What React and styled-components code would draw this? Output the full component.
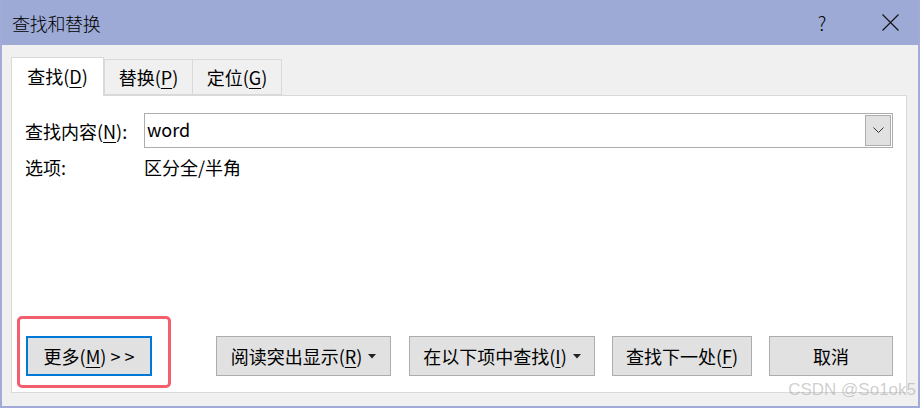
import React from 'react';
import styled, {createGlobalStyle} from 'styled-components';

const GlobalStyle = createGlobalStyle`
  html, body {
    margin: 0;
    padding: 0;
    background: #ffffff;
  }
  body {
    font-family: "Noto Sans CJK SC", "Noto Sans", sans-serif;
    color: #000000;
  }
`;

const Window = styled.div`
  box-sizing: border-box;
  width: 920px;
  height: 408px;
  display: flex;
  flex-direction: column;
  position: relative;
  background: #f0f0f0;
  border: 2px solid #a2abd8;
  border-top: none;
  overflow: hidden;
`;

const TitleBar = styled.div`
  box-sizing: border-box;
  height: 45px;
  margin: 0 -2px;
  padding: 0 12px 0 12px;
  display: flex;
  align-items: center;
  background: #9daad5;
  font-size: 18px;
  line-height: 24px;
`;

const Title = styled.div`
  flex: 1;
  font-weight: 300;
  letter-spacing: -0.3px;
`;

const TitleButton = styled.div`
  width: 36px;
  display: flex;
  justify-content: center;
  align-items: center;
  margin-left: ${props => props.gap || 0}px;
  font-weight: 300;
  font-size: 19px;
`;

const Body = styled.div`
  flex: 1;
  display: flex;
  flex-direction: column;
  padding: 12px 11px 13px 9px;
`;

const TabStrip = styled.div`
  display: flex;
  align-items: flex-end;
  position: relative;
  z-index: 1;
`;

const Tab = styled.div`
  box-sizing: border-box;
  width: ${props => props.width}px;
  height: ${props => props.active ? 39 : 36}px;
  margin-bottom: ${props => props.active ? -1 : 0}px;
  margin-left: ${props => props.active ? 0 : -1}px;
  display: flex;
  justify-content: center;
  align-items: center;
  padding-bottom: ${props => props.active ? 2 : 0}px;
  background: ${props => props.active ? '#ffffff' : '#f0f0f0'};
  border: 1px solid #d9d9d9;
  border-bottom: ${props => props.active ? 'none' : '1px solid #d9d9d9'};
  font-size: 18px;
  line-height: 24px;

  &:nth-child(2) {
    margin-left: 0;
  }
`;

const Mnemonic = styled.u`
  text-decoration-thickness: 1px;
  text-underline-offset: 3px;
`;

const Panel = styled.div`
  box-sizing: border-box;
  flex: 1;
  display: flex;
  flex-direction: column;
  padding: 17px 13px 16px 13px;
  background: #ffffff;
  border: 1px solid #d9d9d9;
`;

const FieldRow = styled.div`
  display: flex;
  align-items: center;
  height: ${props => props.height}px;
  margin-top: ${props => props.top || 0}px;
  font-size: 18px;
  line-height: 24px;
`;

const Label = styled.div`
  width: 119px;
`;

const Combo = styled.div`
  box-sizing: border-box;
  flex: 1;
  height: 35px;
  display: flex;
  align-items: center;
  border: 1px solid #adadad;
  padding: 0 1px 0 2px;
  background: #ffffff;
`;

const ComboText = styled.div`
  flex: 1;
  font-size: 18px;
  line-height: 24px;
  padding-bottom: 4px;
`;

const ComboArrow = styled.div`
  box-sizing: border-box;
  width: 26px;
  height: 31px;
  display: flex;
  justify-content: center;
  align-items: center;
  background: #e1e1e1;
  border: 1px solid #adadad;
`;

const ButtonRow = styled.div`
  margin-top: auto;
  padding-left: 1px;
  display: flex;
  align-items: center;
`;

const Button = styled.div`
  box-sizing: border-box;
  position: relative;
  width: ${props => props.width}px;
  height: 40px;
  margin-left: ${props => props.gap || 0}px;
  display: flex;
  justify-content: center;
  align-items: center;
  gap: 6px;
  background: #e1e1e1;
  border: ${props => props.focused ? '2px solid #0078d7' : '1px solid #adadad'};
  font-size: 18px;
  line-height: 24px;
  white-space: nowrap;
`;

const Highlight = styled.div`
  position: absolute;
  left: -11px;
  top: -22px;
  width: 154px;
  height: 72px;
  box-sizing: border-box;
  border: 3px solid #f2606e;
  border-radius: 5px;
  pointer-events: none;
`;

const Watermark = styled.div`
  position: absolute;
  right: 2px;
  bottom: 6px;
  font-family: "Liberation Sans", Arial, sans-serif;
  font-size: 17px;
  color: rgba(160, 160, 160, 0.5);
  pointer-events: none;
`;

const Caret = () => (
    <svg width="8" height="5" viewBox="0 0 8 5">
        <polygon points="0,0 8,0 4,4.5" fill="#222"/>
    </svg>
);

const Chevron = () => (
    <svg width="11" height="7" viewBox="0 0 11 7">
        <polyline points="0.5,0.5 5.5,5.5 10.5,0.5" fill="none" stroke="#333" strokeWidth="1"/>
    </svg>
);

const CloseIcon = () => (
    <svg width="17" height="17" viewBox="0 0 17 17">
        <path d="M0.5 0.5 L16.5 16.5 M16.5 0.5 L0.5 16.5" stroke="#111" strokeWidth="1.1" fill="none"/>
    </svg>
);

const tabs = [
    {label: '查找', key: 'D', width: 93, active: true},
    {label: '替换', key: 'P', width: 89},
    {label: '定位', key: 'G', width: 90},
];

const App = () => {
    return (
        <>
            <GlobalStyle/>
            <Window>
                <TitleBar>
                    <Title>查找和替换</Title>
                    <TitleButton>?</TitleButton>
                    <TitleButton gap={32}><CloseIcon/></TitleButton>
                </TitleBar>

                <Body>
                    <TabStrip>
                        {tabs.map(tab => (
                            <Tab key={tab.key} width={tab.width} active={tab.active}>
                                {tab.label}(<Mnemonic>{tab.key}</Mnemonic>)
                            </Tab>
                        ))}
                    </TabStrip>

                    <Panel>
                        <FieldRow height={35}>
                            <Label>查找内容(<Mnemonic>N</Mnemonic>):</Label>
                            <Combo>
                                <ComboText>word</ComboText>
                                <ComboArrow><Chevron/></ComboArrow>
                            </Combo>
                        </FieldRow>
                        <FieldRow height={24} top={7}>
                            <Label>选项:</Label>
                            <div>区分全/半角</div>
                        </FieldRow>

                        <ButtonRow>
                            <Button width={126} focused>
                                <Highlight/>
                                <span>更多(<Mnemonic>M</Mnemonic>) &gt; &gt;</span>
                            </Button>
                            <Button width={175} gap={64}>
                                <span>阅读突出显示(<Mnemonic>R</Mnemonic>)</span>
                                <Caret/>
                            </Button>
                            <Button width={186} gap={18}>
                                <span>在以下项中查找(<Mnemonic>I</Mnemonic>)</span>
                                <Caret/>
                            </Button>
                            <Button width={140} gap={17}>
                                <span>查找下一处(<Mnemonic>F</Mnemonic>)</span>
                            </Button>
                            <Button width={124} gap={17}>
                                <span>取消</span>
                            </Button>
                        </ButtonRow>
                    </Panel>
                </Body>

                <Watermark>CSDN @So1ok5</Watermark>
            </Window>
        </>
    );
};

export default App;
